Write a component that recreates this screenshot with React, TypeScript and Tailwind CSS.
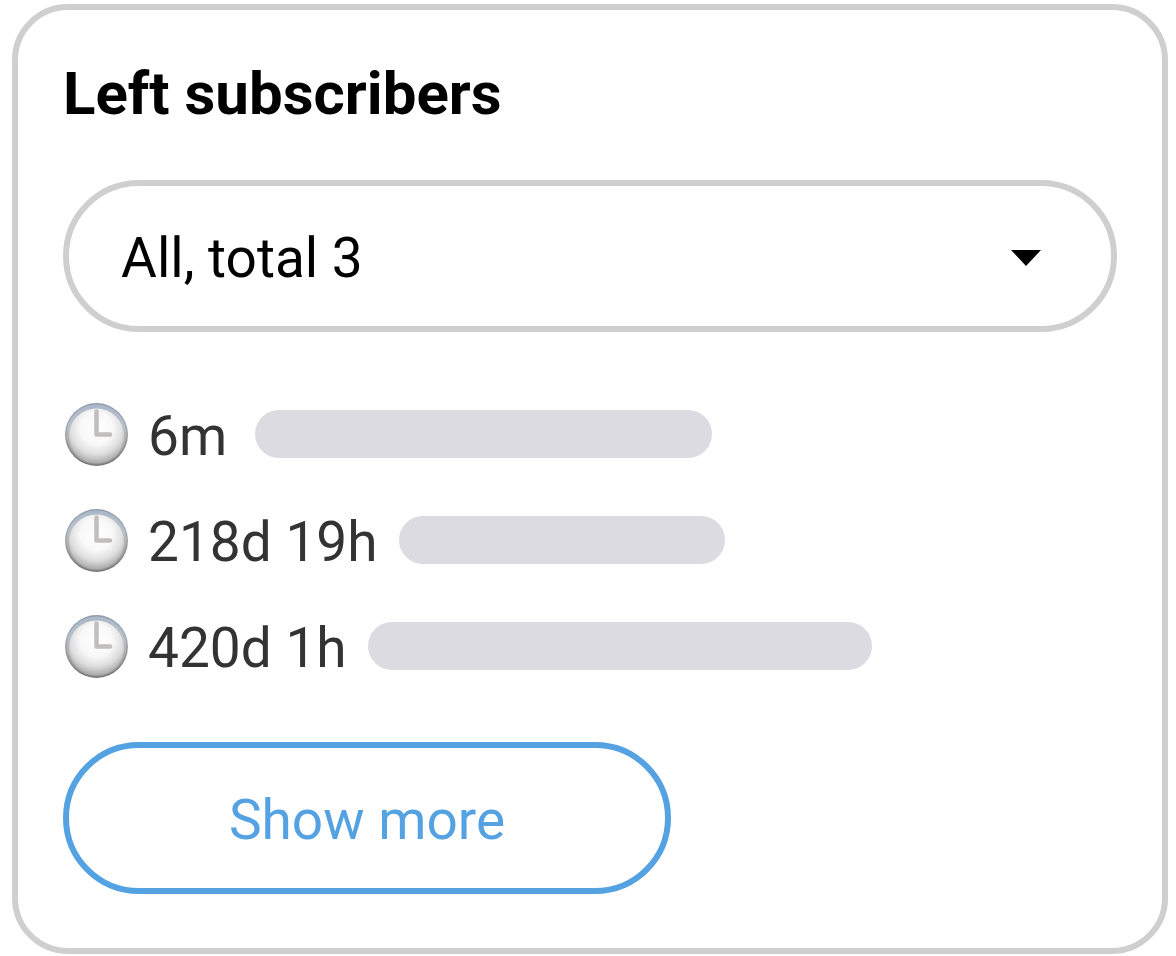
const entries = [
  { id: 1, time: "6m", bar: "ml-7 w-[457px]" },
  { id: 2, time: "218d 19h", bar: "ml-[21px] w-[326px]" },
  { id: 3, time: "420d 1h", bar: "ml-[21px] w-[504px]" },
];

function ClockIcon({ id }: { id: number }) {
  return (
    <svg viewBox="0 0 64 64" className="size-16 shrink-0 overflow-visible" aria-hidden="true">
      <defs>
        <linearGradient id={`rim-${id}`} x1="0" y1="0" x2="0" y2="1">
          <stop offset="0" stopColor="#8f9bab" />
          <stop offset="0.3" stopColor="#a3acb8" />
          <stop offset="0.55" stopColor="#a09c99" />
          <stop offset="1" stopColor="#757575" />
        </linearGradient>
        <linearGradient id={`bevel-${id}`} x1="0" y1="0" x2="0" y2="1">
          <stop offset="0" stopColor="#abb8c8" />
          <stop offset="0.35" stopColor="#b9c1ca" />
          <stop offset="0.6" stopColor="#b0aeac" />
          <stop offset="1" stopColor="#929292" />
        </linearGradient>
        <radialGradient id={`face-${id}`} cx="0.5" cy="0.36" r="0.66">
          <stop offset="0" stopColor="#ffffff" />
          <stop offset="0.45" stopColor="#f8f8f8" />
          <stop offset="0.72" stopColor="#dedede" />
          <stop offset="1" stopColor="#a2a2a2" />
        </radialGradient>
      </defs>
      <circle cx="33.5" cy="32.5" r="31.5" fill={`url(#rim-${id})`} />
      <circle cx="33.5" cy="32.5" r="30" fill={`url(#bevel-${id})`} />
      <ellipse cx="33.5" cy="34" rx="27.5" ry="27.5" fill={`url(#face-${id})`} />
      <path d="M33.5 9.5v23h13.5" fill="none" stroke="#c1bfbd" strokeWidth="4.5" strokeLinecap="round" strokeLinejoin="round" />
    </svg>
  );
}

export default function App() {
  return (
    <main className="bg-white pt-1 pr-2 pb-1 pl-3 font-['Roboto',sans-serif]">
      <section className="rounded-[56px] border-[6px] border-[#cfcfcf] px-[45px] pt-[54px] pb-[54px]">
        <h1 className="text-[60px] leading-[60px] font-bold text-black">Left subscribers</h1>

        <div className="mt-14 grid items-center">
          <select
            aria-label="Subscribers"
            className="col-start-1 row-start-1 h-[152px] w-full appearance-none rounded-full border-[6px] border-[#cfcfcf] bg-white px-[52px] pt-1 text-[55px] text-black"
          >
            <option>All, total 3</option>
          </select>
          <svg
            viewBox="0 0 30 16"
            className="pointer-events-none col-start-1 row-start-1 mt-1 mr-[76px] h-4 w-[30px] justify-self-end"
            aria-hidden="true"
          >
            <path d="M0 0h30L15 16z" fill="#000" />
          </svg>
        </div>

        <ul className="mt-[70px] flex flex-col gap-[42px]">
          {entries.map((entry) => (
            <li key={entry.id} className="flex h-16 items-center">
              <ClockIcon id={entry.id} />
              <span className="ml-[21px] pt-1 text-[55px] leading-[64px] text-[#333]">{entry.time}</span>
              <span className={`h-12 rounded-full bg-[#dcdbe1] ${entry.bar}`} />
            </li>
          ))}
        </ul>

        <button
          type="button"
          className="mt-16 h-[152px] w-[608px] max-w-full rounded-full border-[6px] border-[#54a2e2] pt-1 text-[55px] text-[#54a2e2]"
        >
          Show more
        </button>
      </section>
    </main>
  );
}
